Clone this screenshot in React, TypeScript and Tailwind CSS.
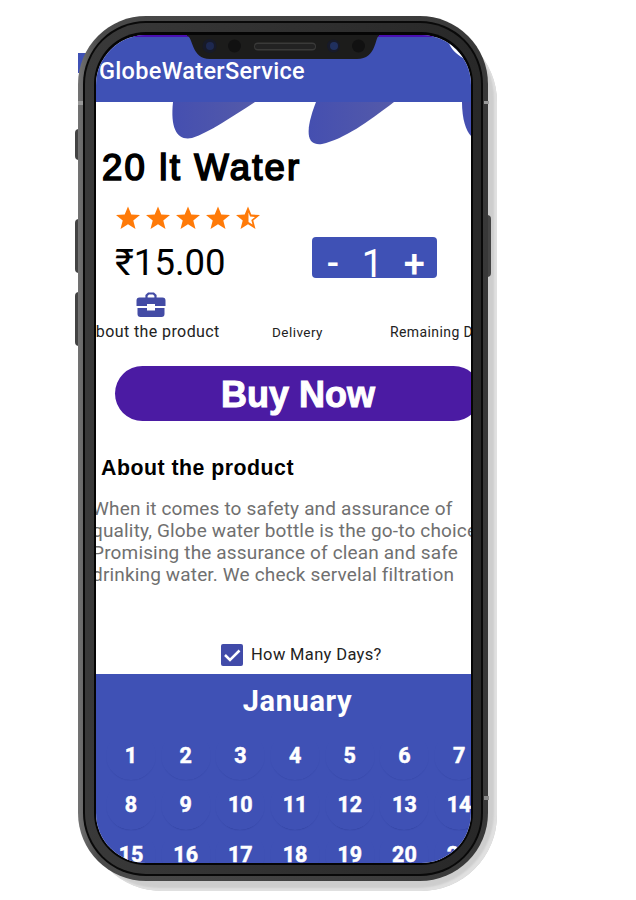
const DAYS = Array.from({ length: 21 }, (_, i) => i + 1);
const STAR = 'M12 .5l3.300 8 8.700.5-6.700 5.500 2.200 8.500-7.500-4.700-7.500 4.700 2.200-8.500L0 9l8.700-.5z';

function Star({ half = false }: { half?: boolean }) {
  return (
    <svg viewBox="0 0 24 23" className="w-6 h-[23px]" fill="#ff7a08">
      <path d={STAR} />
      {half && <path d="M12.500 6.500l1.600 4 4.900.4-3.700 3 1.200 4.600-4-2.600z" fill="#fff" />}
    </svg>
  );
}

function Briefcase() {
  return (
    <svg viewBox="0 0 30 26" className="w-[30px] h-[26px]">
      <path d="M10.500 7V3.500L12.500 1.500h5l2 2V7" fill="none" stroke="#434ba5" strokeWidth="2.200" />
      <path d="M3.500 5.500h23q3 0 3 3V14H19v-2h-8v2H.5V8.500q0-3 3-3zM1.500 16H11v2.500h8V16h9.500v6q0 3-3 3h-21q-3 0-3-3z" fill="#434ba5" />
    </svg>
  );
}

function Header() {
  return (
    <header className="relative h-[67px] shrink-0 bg-[#3f51b5] border-t-2 border-[#4a0fb0]">
      <svg viewBox="0 0 375 125" className="absolute -top-0.5 left-0 w-[375px] h-[125px]">
        <defs>
          <linearGradient id="drop" x1="0" x2="1">
            <stop offset="0" stopColor="#454fb0" />
            <stop offset="1" stopColor="#545aa9" />
          </linearGradient>
        </defs>
        <path d="M77 67h82C134 83 114 97 96 103c-14 3-22-8-19-36z" fill="url(#drop)" />
        <path d="M220 67h78C272 87 248 104 226 109c-15 2-18-11-6-42z" fill="url(#drop)" />
        <path d="M366 67h9v34c-5-5-9-17-9-34z" fill="#454fb0" />
        <path d="M353 8c2 6 7 11 14 15V8z" fill="#fff" />
      </svg>
      <h1 className="absolute left-[3px] top-[20px] text-[23.5px] leading-[28px] tracking-[0.31px] font-medium text-white whitespace-nowrap">
        GlobeWaterService
      </h1>
    </header>
  );
}

function Notch() {
  return (
    <svg viewBox="0 0 192 25" className="absolute left-[91px] top-0 w-[192px] h-[25px]">
      <path d="M0 0h192v1c-4 0-2 23-22 23H23C4 24 6 1 0 1z" fill="#1c1c1b" />
      <circle cx="22.500" cy="11" r="7" fill="#171a29" />
      <circle cx="23" cy="11" r="4" fill="#1d2850" />
      <circle cx="47.500" cy="11" r="6.500" fill="#111" />
      <rect x="67" y="7.500" width="62" height="8" rx="4" fill="#3a3a39" />
      <rect x="68" y="9" width="60" height="5" rx="2.500" fill="#222" />
      <circle cx="146.500" cy="11" r="6.500" fill="#171a29" />
      <circle cx="147" cy="11" r="4" fill="#20305f" />
      <circle cx="171.500" cy="11" r="6.500" fill="#111" />
    </svg>
  );
}

function Screen() {
  return (
    <div className="relative flex flex-col w-[375px] h-[828px] bg-white rounded-[50px] overflow-hidden font-[Roboto,sans-serif]">
      <Header />
      <h2 className="mt-[44px] ml-[6px] h-[44px] text-[36.5px] leading-[44px] tracking-[2.2px] whitespace-nowrap text-black font-['Liberation_Sans',sans-serif] [-webkit-text-stroke:1.7px_#000]">
        20 lt Water
      </h2>
      <div className="flex gap-[6px] mt-[16px] mb-px ml-[20px] h-[22px]">
        <Star /><Star /><Star /><Star /><Star half />
      </div>
      <div className="flex mt-[8px] h-[42px]">
        <p className="w-[197px] ml-[19px] pt-[6px] text-[36.5px] leading-[40px] whitespace-nowrap text-black">₹15.00</p>
        <div className="flex w-[125px] h-[41px] rounded bg-[#3f51b5] text-white overflow-hidden">
          <button className="w-[42px] pt-[9px] text-[36px] leading-[36px] font-medium">-</button>
          <span className="w-[38px] pt-[8px] text-center text-[38px] leading-[38px]">1</span>
          <button className="w-[46px] pt-[9px] text-[38px] leading-[36px] font-medium">+</button>
        </div>
      </div>
      <div className="mt-[13px] ml-[40px] h-[26px]">
        <Briefcase />
      </div>
      <div className="flex h-[22px] mt-[3px] text-[14px] leading-[22px] text-[#222] whitespace-nowrap">
        <span className="shrink-0 w-[187px] -ml-[11px] text-[16px] tracking-[0.4px]">About the product</span>
        <span className="shrink-0 w-[118px] text-[13.500px] tracking-[0.45px]">Delivery</span>
        <span className="tracking-[0.4px]">Remaining Days</span>
      </div>
      <button className="mt-[23px] ml-[19px] w-[366px] h-[55px] shrink-0 rounded-full bg-[#4b1ba3] text-[36px] leading-[57px] text-white font-bold whitespace-nowrap font-['Liberation_Sans',sans-serif] [-webkit-text-stroke:1px_#fff]">
        Buy Now
      </button>
      <h3 className="mt-[34px] ml-[5px] h-[26px] text-[21.300px] leading-[26px] tracking-[0.5px] font-bold text-black whitespace-nowrap font-['Liberation_Sans',sans-serif]">
        About the product
      </h3>
      <p className="mt-[17px] -ml-[4px] h-[138px] shrink-0 text-[19px] leading-[22px] tracking-[0.16px] text-[#707070] whitespace-nowrap">
        When it comes to safety and assurance of<br />
        quality, Globe water bottle is the go-to choice.<br />
        Promising the assurance of clean and safe<br />
        drinking water. We check servelal filtration
      </p>
      <label className="flex items-center h-[22px] mt-[8px] ml-[125px] gap-[8px] text-[16.500px] tracking-[0.35px] text-[#222] whitespace-nowrap">
        <svg viewBox="0 0 22 22" className="w-[22px] h-[22px]">
          <rect width="22" height="22" rx="2" fill="#414ba9" />
          <path d="M4 11l5 5 9.500-9.500" fill="none" stroke="#fff" strokeWidth="2.500" />
        </svg>
        How Many Days?
      </label>
      <section className="mt-[8px] h-[200px] shrink-0 bg-[#3f51b5] text-white font-bold">
        <h2 className="pt-[9px] pl-[28px] h-[57px] text-center text-[29px] leading-[36px] tracking-[0.6px]">January</h2>
        <div className="grid grid-cols-[repeat(7,50px)] gap-x-[4.700px] ml-[10px]">
          {DAYS.map((d) => (
            <div
              key={d}
              className="h-[49.300px] text-center text-[21.500px] leading-[50px] rounded-full shadow-[0_1px_1px_-1px_#26368c] [-webkit-text-stroke:0.5px_#fff]"
            >
              {d}
            </div>
          ))}
        </div>
      </section>
      <Notch />
    </div>
  );
}

export default function App() {
  return (
    <main className="relative w-[636px] h-[900px] bg-white overflow-hidden">
      <div className="absolute left-[78px] top-[53px] w-[20px] h-[20px] bg-[#3f51b5]" />
      <div className="absolute left-[86px] top-[26px] w-[411px] h-[865px] rounded-[76px] bg-[#cdcdcd] shadow-[inset_-3px_-3px_2px_#e0e0e0]" />
      {/* side buttons */}
      <div className="absolute left-[75px] top-[129px] w-[5px] h-[31px] rounded-l bg-[#444]" />
      <div className="absolute left-[75px] top-[219px] w-[5px] h-[54px] rounded-l bg-[#444]" />
      <div className="absolute left-[75px] top-[292px] w-[5px] h-[54px] rounded-l bg-[#444]" />
      <div className="absolute left-[486px] top-[215px] w-[5px] h-[62px] rounded-r bg-[#444]" />
      <div className="absolute left-[78px] top-[16px] rounded-[68px] bg-linear-to-r from-[#737373] via-[#4a4a4a] via-5% to-[#383838] p-[5px]">
        <div className="rounded-[63px] bg-[#090909] p-[2px]">
          <div className="rounded-[61px] bg-linear-to-r from-[#393939] to-[#282828] p-[9px] pr-[8px]">
            <div className="rounded-[52px] bg-[#050505] p-[2px] pt-[3px]">
              <Screen />
            </div>
          </div>
        </div>
      </div>
      {/* antenna bands */}
      <div className="absolute left-[78px] top-[101px] w-[5px] h-[4px] bg-[#999]" />
      <div className="absolute left-[484px] top-[101px] w-[5px] h-[3px] bg-[#999]" />
      <div className="absolute left-[484px] top-[796px] w-[5px] h-[4px] bg-[#888]" />
    </main>
  );
}
